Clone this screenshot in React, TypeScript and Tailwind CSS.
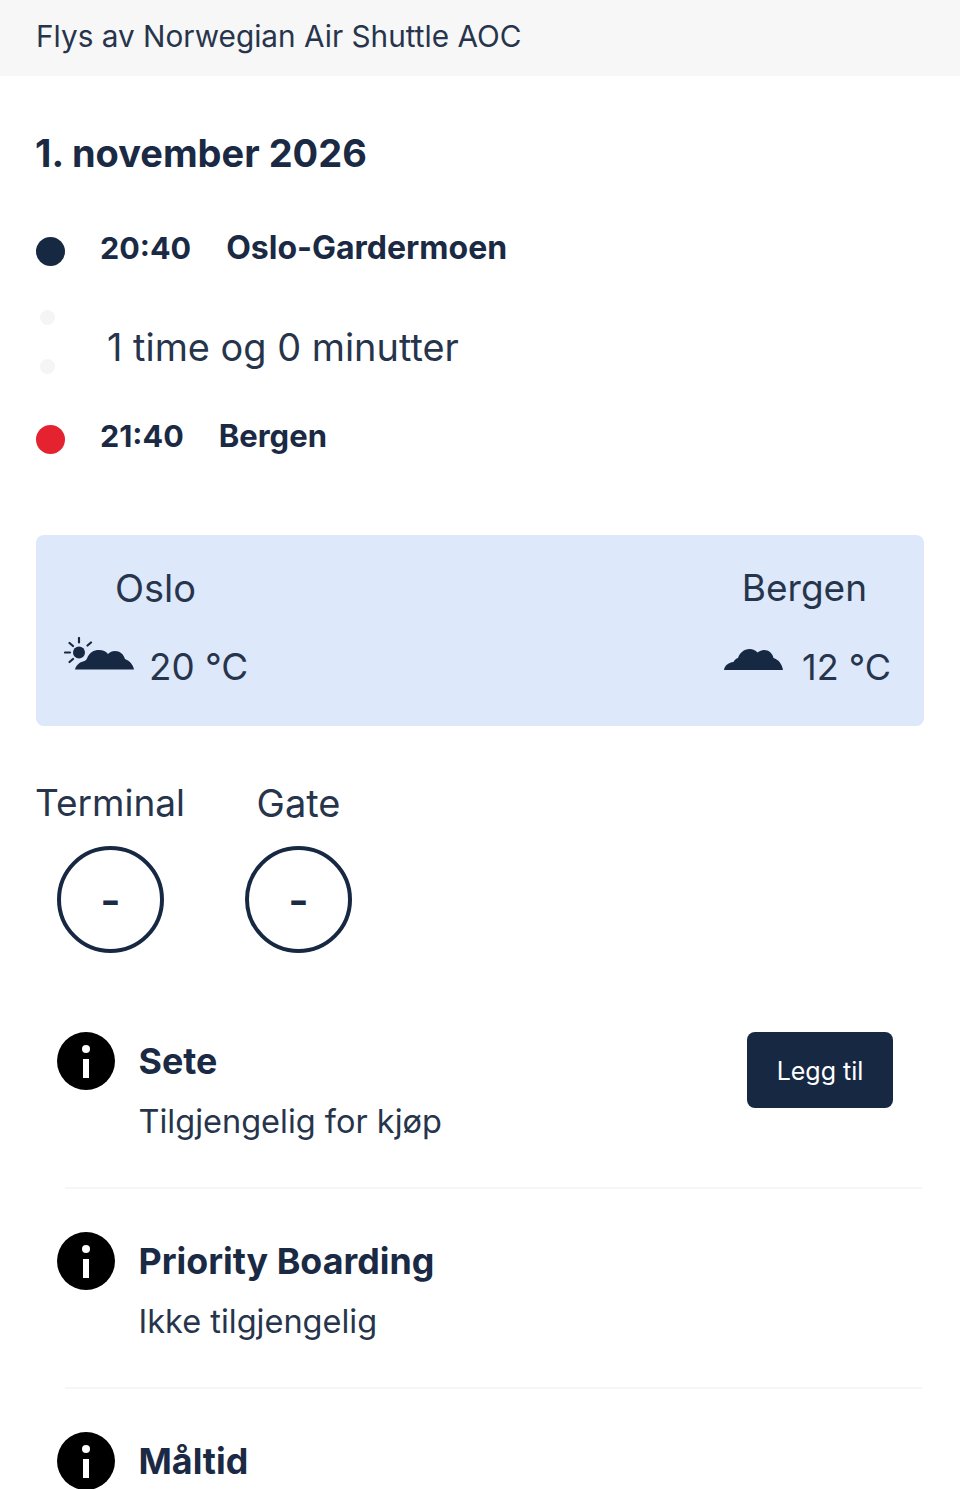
import { ReactNode } from 'react';

const Cloud = ({ className }: { className?: string }) => (
  <svg viewBox="0 0 59 21" className={className} fill="#172843">
    <path d="M0 21c.5-4 4-7.500 9.500-8 1-2 2.500-3.500 4.500-4 1.500-5 6-9 11.500-9 3.500 0 6 1.500 8 3.500C35.500 2 38 1 40 1c5 0 8.500 3.500 9.500 8 5 1.500 8.500 6 9.500 12z" />
  </svg>
);

const SunCloud = () => (
  <svg viewBox="0 0 70 33" className="w-[70px] h-[33px] -mt-[5px] shrink-0">
    <g stroke="#172843" strokeWidth="2.2" strokeLinecap="round">
      <path d="M1 15.500h5M5.500 6l3.500 3M15 1v4.500M27 5.500l-3.500 3M5.500 25l3.500-3" />
    </g>
    <circle cx="15" cy="15.500" r="6" fill="#172843" />
    <path
      fill="#172843"
      d="M11 32.500c1-4 4-7 8-8 2-.5 3-1 4-3 2-6 7-8.500 12-8.500 4 0 7 1.500 9 4 2-2 4-3 7-3 5 0 8.500 3 10 8 4 1.500 8 5 9 10.500z"
    />
  </svg>
);

const InfoDot = () => (
  <div className="w-[58px] h-[58px] rounded-full bg-black flex flex-col items-center justify-center shrink-0">
    <div className="w-[8px] h-[8px] rounded-full bg-white mb-[6px]" />
    <div className="w-[6px] h-[19px] bg-white" />
  </div>
);

const Row = ({ title, sub, action, last }: { title: string; sub?: string; action?: ReactNode; last?: boolean }) => (
  <div className={last ? 'ml-[65px] mr-[38px]' : 'ml-[65px] mr-[38px] pb-[45px] mb-[43px] border-b-2 border-[#f6f6f6]'}>
    <div className="flex items-start justify-between -ml-[8px] pr-[29px]">
      <div className="flex gap-[23.5px]">
        <InfoDot />
        <div className="pt-[6px]">
          <div className="text-[35.8px] leading-[46px] font-bold text-[#1b2a44]">{title}</div>
          {sub && <div className="text-[32.5px] leading-[40px] mt-[18px] text-[#27354c]">{sub}</div>}
        </div>
      </div>
      {action}
    </div>
  </div>
);

export default function App() {
  return (
    <div className="w-[960px] h-[1489px] overflow-hidden bg-white text-[#1b2a44] font-['Inter',sans-serif]">
      <div className="h-[76px] bg-[#f7f7f7] px-[36px] pb-[3px] flex items-center text-[29.75px] text-[#27354c]">
        Flys av Norwegian Air Shuttle AOC
      </div>

      <div className="px-[36px] pt-[52px]">
        <h1 className="text-[38px] leading-[50px] font-bold -ml-px">1. november 2026</h1>

        <div className="mt-[50px] flex items-center h-[40px]">
          <div className="w-[29px] h-[29px] rounded-full bg-[#172843] mt-[6px]" />
          <div className="ml-[35px] text-[30.5px] font-bold">20:40</div>
          <div className="ml-[35px] text-[32px] font-bold">Oslo-Gardermoen</div>
        </div>

        <div className="mt-[40px] flex h-[68px]">
          <div className="w-[19px] flex flex-col justify-between items-end py-[2px]">
            <div className="w-[15px] h-[15px] rounded-full bg-[#f5f5f5]" />
            <div className="w-[15px] h-[15px] rounded-full bg-[#f5f5f5]" />
          </div>
          <div className="ml-[52px] mt-[5px] text-[37.9px] leading-[68px] text-[#27354c]">1 time og 0 minutter</div>
        </div>

        <div className="mt-[40px] flex items-center h-[40px]">
          <div className="w-[29px] h-[29px] rounded-full bg-[#e5222f] mt-[6px]" />
          <div className="ml-[35px] text-[30.5px] font-bold">21:40</div>
          <div className="ml-[35px] text-[31px] font-bold">Bergen</div>
        </div>

        <div className="mt-[79px] h-[191px] rounded-[8px] bg-[#dde8fb] flex justify-between pl-[28px] pr-[33px] pt-[28px]">
          <div>
            <div className="pl-[51px] text-[38px] leading-[50px] text-[#27354c]">Oslo</div>
            <div className="mt-[29px] flex items-start gap-[15px]">
              <SunCloud />
              <span className="text-[36.8px] leading-[50px] text-[#27354c]">20 °C</span>
            </div>
          </div>
          <div className="flex flex-col items-end">
            <div className="pr-[24px] text-[37px] leading-[50px] text-[#27354c]">Bergen</div>
            <div className="mt-[29px] flex items-start gap-[19px]">
              <Cloud className="w-[59px] h-[21px] mt-[7px] shrink-0" />
              <span className="text-[36px] leading-[50px] text-[#27354c]">12 °C</span>
            </div>
          </div>
        </div>

        <div className="mt-[52px] flex">
          <div className="w-[150px] flex flex-col items-center">
            <div className="mr-[2px] text-[37px] leading-[50px] text-[#27354c]">Terminal</div>
            <div className="mt-[18px] mr-px w-[107px] h-[107px] rounded-full border-[4px] border-[#172843] flex items-center justify-center text-[44px] font-semibold">-</div>
          </div>
          <div className="ml-[38px] w-[150px] flex flex-col items-center">
            <div className="mr-px text-[38px] leading-[50px] text-[#27354c]">Gate</div>
            <div className="mt-[18px] mr-px w-[107px] h-[107px] rounded-full border-[4px] border-[#172843] flex items-center justify-center text-[44px] font-semibold">-</div>
          </div>
        </div>
      </div>

      <div className="mt-[79px]">
        <Row
          title="Sete"
          sub="Tilgjengelig for kjøp"
          action={
            <button className="w-[146px] h-[76px] pt-[3px] rounded-[8px] bg-[#172843] text-white text-[25px]">Legg til</button>
          }
        />
        <Row title="Priority Boarding" sub="Ikke tilgjengelig" />
        <Row title="Måltid" last />
      </div>
    </div>
  );
}
